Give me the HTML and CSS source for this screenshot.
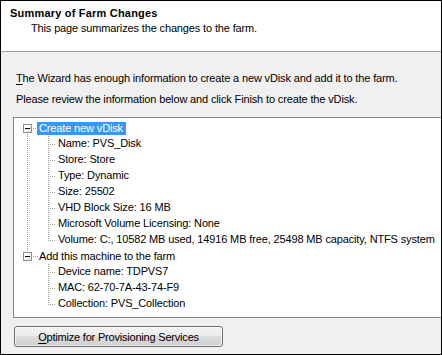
FILE: index.html
```html
<!DOCTYPE html>
<html lang="en">
<head>
    <meta charset="UTF-8">
    <title>Summary of Farm Changes</title>
    <link rel="stylesheet" href="styles.css">
</head>
<body>
    <div class="wizard">
        <div class="header">
            <div class="title">Summary of Farm Changes</div>
            <div class="subtitle">This page summarizes the changes to the farm.</div>
        </div>

        <div class="content">
            <p class="intro"><u>T</u>he Wizard has enough information to create a new vDisk and add it to the farm.</p>
            <p class="intro second">Please review the information below and click Finish to create the vDisk.</p>

            <ul class="tree">
                <li class="node">
                    <div class="row"><span class="exp"></span><span class="label selected">Create new vDisk</span></div>
                    <ul class="kids">
                        <li><span class="label">Name: PVS_Disk</span></li>
                        <li><span class="label">Store: Store</span></li>
                        <li><span class="label">Type: Dynamic</span></li>
                        <li><span class="label">Size: 25502</span></li>
                        <li><span class="label">VHD Block Size: 16 MB</span></li>
                        <li><span class="label">Microsoft Volume Licensing: None</span></li>
                        <li><span class="label">Volume: C:, 10582 MB used, 14916 MB free, 25498 MB capacity, NTFS system</span></li>
                    </ul>
                </li>
                <li class="node">
                    <div class="row"><span class="exp"></span><span class="label">Add this machine to the farm</span></div>
                    <ul class="kids">
                        <li><span class="label">Device name: TDPVS7</span></li>
                        <li><span class="label">MAC: 62-70-7A-43-74-F9</span></li>
                        <li><span class="label">Collection: PVS_Collection</span></li>
                    </ul>
                </li>
            </ul>

            <button type="button" class="optimize-button"><u>O</u>ptimize for Provisioning Services</button>
        </div>
    </div>
</body>
</html>
```

FILE: styles.css
```css
* {
    margin: 0;
    padding: 0;
    box-sizing: border-box;
}

body {
    font-family: 'Liberation Sans', Arial, sans-serif;
    font-size: 11px;
    line-height: 13px;
    letter-spacing: -0.14px;
    color: #000;
    background: #f0f0f0;
}

.wizard {
    width: 442px;
    height: 355px;
    border: 1px solid #000;
    background: #f0f0f0;
    overflow: hidden;
}

.header {
    height: 51px;
    background: #fff;
    border-bottom: 1px solid #a0a0a0;
    padding: 6px 0 0 9px;
}

.title {
    font-weight: bold;
    letter-spacing: 0.2px;
}

.subtitle {
    margin-top: 2px;
    padding-left: 21px;
}

.content {
    padding: 20px 0 0 12px;
}

.intro {
    padding-left: 3px;
    white-space: nowrap;
}

.intro.second {
    margin-top: 8px;
}

.intro u {
    text-decoration-thickness: 1px;
    text-underline-offset: 2px;
}

.tree {
    list-style: none;
    margin-top: 11px;
    width: 440px;
    height: 201px;
    background: #fff;
    border: 1px solid #828790;
    padding-top: 2px;
}

.tree li {
    position: relative;
}

.row {
    height: 16px;
    display: flex;
    align-items: flex-start;
    padding-left: 9px;
}

/* dotted connector between a top node and the next one */
.node:not(:last-child)::before {
    content: "";
    position: absolute;
    left: 13px;
    top: 8px;
    bottom: -8px;
    width: 1px;
    background: repeating-linear-gradient(to bottom, #a0a0a0 0 1px, transparent 1px 2px);
}

.exp {
    position: relative;
    z-index: 1;
    width: 9px;
    height: 9px;
    margin-top: 4px;
    border: 1px solid #919191;
    background: linear-gradient(135deg, #fff 30%, #e4e4e4);
}

.exp::before {
    content: "";
    position: absolute;
    left: 1px;
    top: 3px;
    width: 5px;
    height: 1px;
    background: #000;
}

.exp::after {
    content: "";
    position: absolute;
    left: 9px;
    top: 3px;
    width: 5px;
    height: 1px;
    background: repeating-linear-gradient(to right, #a0a0a0 0 1px, transparent 1px 2px);
}

.label {
    display: inline-block;
    height: 13px;
    margin-top: 2px;
    padding: 0 3px 0 2px;
    white-space: nowrap;
}

.row .label {
    margin-left: 5px;
}

.label.selected {
    background: #3399ff;
    color: #fff;
}

.kids {
    list-style: none;
}

.kids li {
    height: 16px;
    padding-left: 42px;
}

.kids li .label {
    margin-top: 1px;
}

.kids li::before {
    content: "";
    position: absolute;
    left: 34px;
    top: 0;
    height: 16px;
    width: 1px;
    background: repeating-linear-gradient(to bottom, #a0a0a0 0 1px, transparent 1px 2px);
}

.kids li:last-child::before {
    height: 9px;
}

.kids li::after {
    content: "";
    position: absolute;
    left: 35px;
    top: 8px;
    width: 7px;
    height: 1px;
    background: repeating-linear-gradient(to right, transparent 0 1px, #a0a0a0 1px 2px);
}

.optimize-button {
    display: block;
    margin: 8px 0 0 1px;
    width: 209px;
    height: 21px;
    font-family: inherit;
    font-size: 11px;
    letter-spacing: -0.2px;
    color: #000;
    border: 1px solid #707070;
    border-radius: 3px;
    background: linear-gradient(to bottom, #f2f2f2 0, #ebebeb 50%, #dddddd 50%, #cfcfcf 100%);
    box-shadow: inset 0 0 0 1px rgba(255, 255, 255, 0.6);
}

.optimize-button u {
    text-underline-offset: 2px;
}
```
